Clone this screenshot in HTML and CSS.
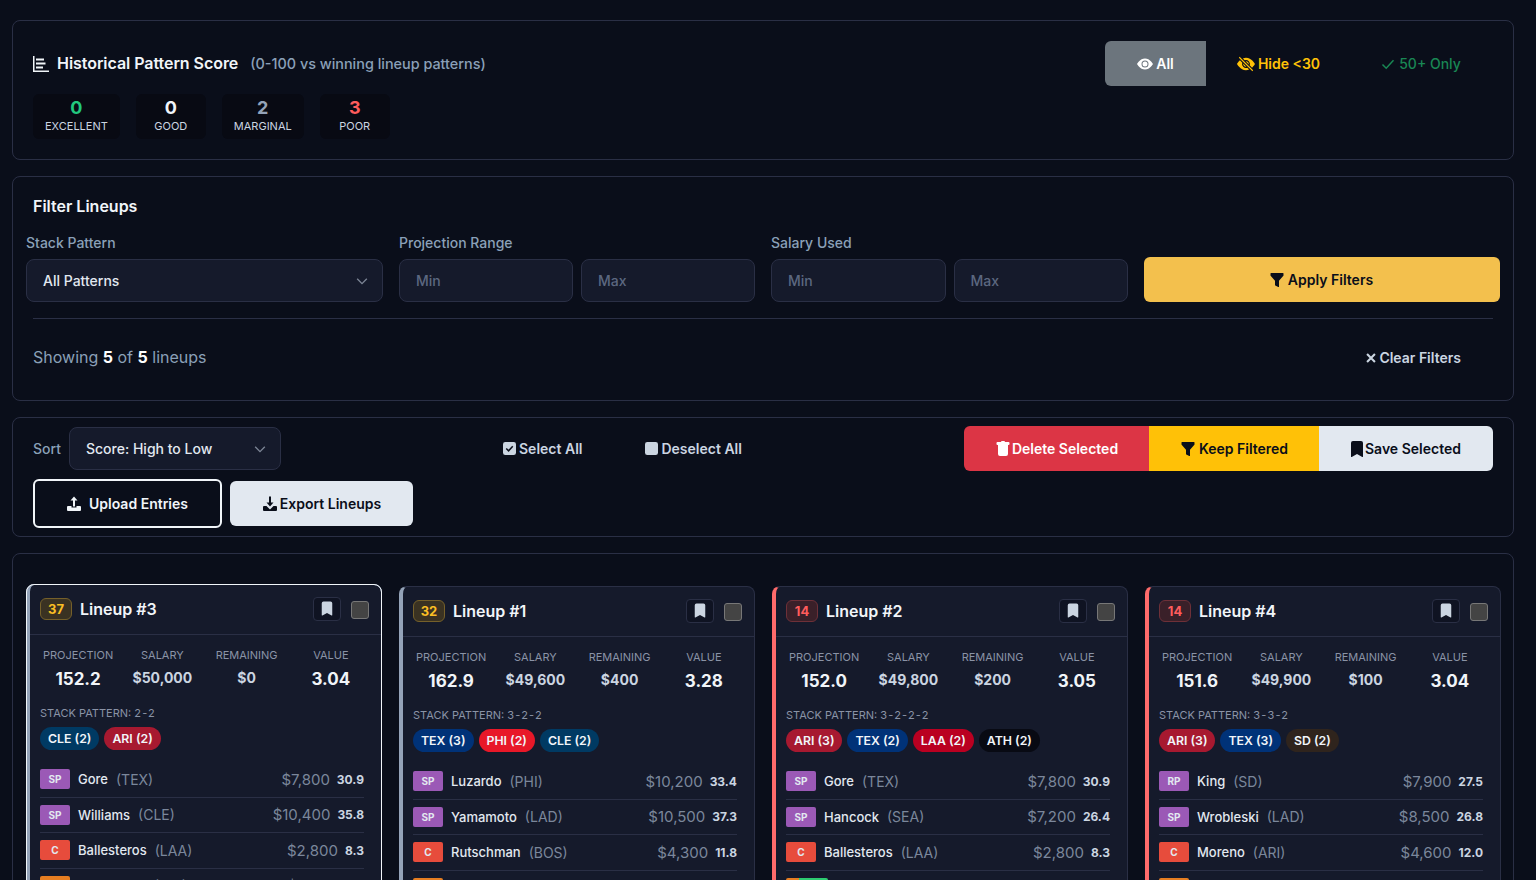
FILE: index.html
```html
<!DOCTYPE html>
<html lang="en">
<head>
    <meta charset="UTF-8">
    <meta name="viewport" content="width=device-width, initial-scale=1.0">
    <title>Lineups</title>
    <link rel="stylesheet" href="styles.css">
</head>
<body>
    <svg class="icon-defs" width="0" height="0" aria-hidden="true">
        <symbol id="i-bookmark" viewBox="0 0 16 16"><path fill="currentColor" d="M2 2a2 2 0 0 1 2-2h8a2 2 0 0 1 2 2v13.5a.5.5 0 0 1-.78.42L8 13.1l-5.22 2.82A.5.5 0 0 1 2 15.5V2z"/></symbol>
        <symbol id="i-funnel" viewBox="0 0 16 16"><path fill="currentColor" d="M1.5 1.5A.5.5 0 0 1 2 1h12a.5.5 0 0 1 .5.5v2a.5.5 0 0 1-.13.33L10 8.7v5.8a.5.5 0 0 1-.75.43l-3-1.5a.5.5 0 0 1-.25-.43V8.7L1.63 3.83a.5.5 0 0 1-.13-.33v-2z"/></symbol>
        <symbol id="i-chev" viewBox="0 0 16 16"><path fill="none" stroke="currentColor" stroke-width="1.6" d="M2.5 5.5L8 11l5.5-5.5"/></symbol>
    </svg>

    <section class="panel score-panel">
        <div class="score-left">
            <div class="score-title">
                <svg class="chart-icon" viewBox="0 0 16 16"><path fill="currentColor" d="M0 0h1.5v14.5H16V16H0z"/><path fill="currentColor" d="M3 2.5h8v2H3zM3 6.5h9.500v2H3zM3 10.5h7v2H3z"/></svg>
                <h2>Historical Pattern Score</h2>
                <span class="score-sub">(0-100 vs winning lineup patterns)</span>
            </div>
            <div class="score-stats">
                <div class="stat"><b class="green">0</b><span>EXCELLENT</span></div>
                <div class="stat"><b class="white">0</b><span>GOOD</span></div>
                <div class="stat"><b class="grey">2</b><span>MARGINAL</span></div>
                <div class="stat"><b class="red">3</b><span>POOR</span></div>
            </div>
        </div>
        <div class="score-toggle">
            <button class="tog tog-all">
                <svg class="ico" viewBox="0 0 16 16"><path fill="currentColor" d="M10.5 8a2.5 2.5 0 1 1-5 0 2.5 2.5 0 0 1 5 0z"/><path fill="currentColor" d="M0 8s3-5.5 8-5.5S16 8 16 8s-3 5.5-8 5.5S0 8 0 8zm8 3.5a3.5 3.5 0 1 0 0-7 3.5 3.5 0 0 0 0 7z"/></svg>
                All
            </button>
            <button class="tog tog-hide">
                <svg class="ico ico-slash" viewBox="0 0 16 16"><path fill="currentColor" d="m10.79 12.912-1.614-1.615a3.5 3.5 0 0 1-4.474-4.474l-2.06-2.06C.938 6.278 0 8 0 8s3 5.5 8 5.5a7.029 7.029 0 0 0 2.79-.588zM5.21 3.088A7.028 7.028 0 0 1 8 2.5c5 0 8 5.5 8 5.5s-.939 1.721-2.641 3.238l-2.062-2.062a3.5 3.5 0 0 0-4.474-4.474L5.21 3.089z"/><path fill="currentColor" d="M5.525 7.646a2.5 2.5 0 0 0 2.829 2.829l-2.83-2.829zm4.95.708-2.829-2.83a2.5 2.5 0 0 1 2.829 2.829zm3.171 6-12-12 .708-.708 12 12-.708.708z"/></svg>
                Hide &lt;30
            </button>
            <button class="tog tog-only">
                <svg class="ico" viewBox="0 0 16 16"><path fill="none" stroke="currentColor" stroke-width="1.5" d="M2.5 8.5l3.7 3.7 7.3-8"/></svg>
                50+ Only
            </button>
        </div>
    </section>

    <section class="panel filter-panel">
        <h3 class="filter-title">Filter Lineups</h3>
        <div class="filter-row">
            <div class="field field-pattern">
                <label>Stack Pattern</label>
                <div class="select">All Patterns<svg class="chev"><use href="#i-chev"/></svg></div>
            </div>
            <div class="field field-range">
                <label>Projection Range</label>
                <div class="range"><div class="input">Min</div><div class="input">Max</div></div>
            </div>
            <div class="field field-salary">
                <label>Salary Used</label>
                <div class="range"><div class="input">Min</div><div class="input">Max</div></div>
            </div>
            <button class="btn-apply"><svg class="ico"><use href="#i-funnel"/></svg>Apply Filters</button>
        </div>
        <div class="filter-foot">
            <p class="showing">Showing <b>5</b> of <b>5</b> lineups</p>
            <button class="btn-clear">
                <svg class="ico ico-x" viewBox="0 0 16 16"><path stroke="currentColor" stroke-width="2.4" d="M3.5 3.5l9 9M12.5 3.5l-9 9"/></svg>
                Clear Filters
            </button>
        </div>
    </section>

    <section class="panel sort-panel">
        <div class="sort-top">
            <span class="sort-label">Sort</span>
            <div class="select select-sort">Score: High to Low<svg class="chev"><use href="#i-chev"/></svg></div>
            <button class="link-btn select-all">
                <svg class="ico" viewBox="1 1 14 14"><rect x="1" y="1" width="14" height="14" rx="2.5" fill="currentColor"/><path fill="none" stroke="#0a0e1a" stroke-width="1.6" d="M4.5 8l2.5 2.5 4.5-5"/></svg>
                Select All
            </button>
            <button class="link-btn deselect-all">
                <svg class="ico" viewBox="1 1 14 14"><rect x="1" y="1" width="14" height="14" rx="2.5" fill="currentColor"/></svg>
                Deselect All
            </button>
            <div class="bulk">
                <button class="bulk-btn bulk-del">
                    <svg class="ico" viewBox="0 0 16 16"><path fill="currentColor" d="M2.5 1a1 1 0 0 0-1 1v1a1 1 0 0 0 1 1H3v9a2 2 0 0 0 2 2h6a2 2 0 0 0 2-2V4h.5a1 1 0 0 0 1-1V2a1 1 0 0 0-1-1H10a1 1 0 0 0-1-1H7a1 1 0 0 0-1 1H2.5z"/></svg>
                    Delete Selected
                </button>
                <button class="bulk-btn bulk-keep"><svg class="ico"><use href="#i-funnel"/></svg>Keep Filtered</button>
                <button class="bulk-btn bulk-save"><svg class="ico"><use href="#i-bookmark"/></svg>Save Selected</button>
            </div>
        </div>
        <div class="sort-actions">
            <button class="btn-upload">
                <svg class="ico" viewBox="0 0 16 16"><path fill="currentColor" d="M8 .5l3.5 4H9v6H7v-6H4.5z"/><path fill="currentColor" d="M1 11a1 1 0 0 1 1-1h3.5v1.5h5V10H14a1 1 0 0 1 1 1v3a1 1 0 0 1-1 1H2a1 1 0 0 1-1-1z"/></svg>
                Upload Entries
            </button>
            <button class="btn-export">
                <svg class="ico" viewBox="0 0 16 16"><path fill="currentColor" d="M8 10.5l3.5-4H9V.5H7v6H4.5z"/><path fill="currentColor" d="M1 11a1 1 0 0 1 1-1h2.5L8 13.5 11.5 10H14a1 1 0 0 1 1 1v3a1 1 0 0 1-1 1H2a1 1 0 0 1-1-1z"/></svg>
                Export Lineups
            </button>
        </div>
    </section>

    <section class="panel cards-panel">
        <div class="cards" id="cards"></div>
    </section>

    <script src="app.js"></script>
</body>
</html>
```

FILE: styles.css
```css
* {
    box-sizing: border-box;
}

html,
body {
    height: 880px;
    overflow: hidden;
}

body {
    margin: 0;
    padding: 20px 22px 0 12px;
    background-color: #0a0e1a;
    color: #e2e8f0;
    font-family: 'Inter', sans-serif;
    font-size: 14px;
}

button {
    font-family: 'Inter', sans-serif;
    font-size: 14px;
    font-weight: 600;
    padding: 0;
    border: none;
    display: flex;
    align-items: center;
    justify-content: center;
    gap: 3px;
    cursor: pointer;
}

.icon-defs {
    position: absolute;
}

.ico {
    width: 16px;
    height: 16px;
    flex: none;
}

.panel {
    border: 1px solid #2a2f45;
    border-radius: 8px;
    margin-bottom: 16px;
}

/* score panel */
.score-panel {
    height: 140px;
    padding: 20px 23px 20px 20px;
    display: flex;
    justify-content: space-between;
}

.score-title {
    display: flex;
    align-items: center;
    height: 45px;
}

.chart-icon {
    width: 16px;
    height: 16px;
    color: #f1f5f9;
    margin-right: 8px;
}

.score-title h2 {
    margin: -2px 0 0;
    font-size: 16px;
    font-weight: 600;
    letter-spacing: -0.05px;
    color: #f1f5f9;
}

.score-sub {
    margin-left: 12px;
    font-size: 14.4px;
    font-weight: 500;
    color: #8aa0b8;
}

.score-stats {
    display: flex;
    gap: 16px;
    margin-top: 8px;
}

.stat {
    min-width: 70px;
    height: 45px;
    padding: 4px 12px 0;
    background-color: #080a13;
    border-radius: 6px;
    text-align: center;
    display: flex;
    flex-direction: column;
}

.stat b {
    font-size: 18px;
    line-height: 20px;
    font-weight: 700;
}

.stat span {
    font-size: 11px;
    line-height: 17px;
    color: #cbd5e1;
}

.green { color: #22c77e; }
.white { color: #f1f5f9; }
.grey { color: #94a3b8; }
.red { color: #ff5c5c; }

.score-toggle {
    display: flex;
    height: 45px;
}

.tog {
    height: 45px;
    background: none;
}

.tog-all {
    width: 101px;
    background-color: #6c757d;
    color: #fff;
    border-radius: 6px 0 0 6px;
}

.tog-hide {
    width: 145px;
    color: #ffc107;
}

.ico-slash {
    width: 18px;
    height: 18px;
}

.tog-only {
    width: 139px;
    color: #198754;
    font-weight: 500;
}

/* filter panel */
.filter-panel {
    height: 225px;
    padding: 19px 13px 0;
}

.filter-title {
    margin: 0 0 18px 7px;
    font-size: 16px;
    line-height: 20px;
    font-weight: 600;
    color: #f1f5f9;
}

.filter-row {
    display: flex;
    align-items: flex-end;
    gap: 16px;
}

.field label {
    display: block;
    margin-bottom: 8px;
    font-size: 14px;
    line-height: 17px;
    font-weight: 500;
    color: #8aa0b8;
}

.field-pattern,
.field-salary {
    width: 357px;
}

.field-range {
    width: 356px;
}

.range {
    display: flex;
    gap: 8px;
}

.select,
.input {
    height: 43px;
    display: flex;
    align-items: center;
    justify-content: space-between;
    padding: 0 16px;
    background-color: #151a2b;
    border: 1px solid #2a2f45;
    border-radius: 8px;
}

.select {
    font-weight: 500;
    color: #e2e8f0;
}

.input {
    flex: 1;
    color: #5c6880;
    font-weight: 500;
}

.chev {
    width: 14px;
    height: 14px;
    margin-right: -3px;
    color: #7b8494;
}

.btn-apply {
    flex: 1;
    height: 45px;
    padding-right: 2px;
    background-color: #f3c04d;
    color: #0a0e1a;
    border-radius: 6px;
}

.filter-foot {
    margin: 16px 7px 0;
    padding-right: 32px;
    border-top: 1px solid #2a2f45;
    height: 76px;
    display: flex;
    align-items: center;
    justify-content: space-between;
}

.showing {
    margin: 0;
    font-size: 16px;
    color: #8aa0b8;
}

.showing b {
    color: #fff;
    font-weight: 700;
}

.btn-clear {
    margin-top: 2px;
    gap: 1px;
    background: none;
    color: #cbd5e1;
}

.ico-x {
    width: 14px;
    height: 14px;
}

/* sort panel */
.sort-panel {
    height: 120px;
    padding: 8px 20px 0;
}

.sort-top {
    display: flex;
    align-items: center;
}

.sort-label {
    color: #8aa0b8;
    font-weight: 500;
    width: 36px;
}

.select-sort {
    width: 212px;
}

.link-btn {
    background: none;
    color: #cbd5e1;
    height: 45px;
}

.link-btn .ico {
    width: 13px;
    height: 13px;
}

.select-all {
    margin-left: 222px;
}

.deselect-all {
    margin-left: 63px;
}

.bulk {
    margin-left: auto;
    display: flex;
}

.bulk-btn {
    height: 45px;
}

.bulk-del {
    width: 185px;
    gap: 1px;
    background-color: #dc3545;
    color: #fff;
    border-radius: 6px 0 0 6px;
}

.bulk-keep {
    width: 170px;
    background-color: #ffc107;
    color: #0a0e1a;
}

.bulk-save {
    width: 174px;
    padding-right: 2px;
    gap: 0;
    background-color: #e2e8f0;
    color: #0a0e1a;
    border-radius: 0 6px 6px 0;
}

.sort-actions {
    display: flex;
    align-items: center;
    gap: 8px;
    margin-top: 8px;
}

.sort-actions button {
    border-radius: 6px;
}

.btn-upload {
    width: 189px;
    height: 49px;
    background: none;
    border: 2px solid #f1f5f9;
    color: #f1f5f9;
    gap: 6px;
}

.btn-upload .ico {
    margin: 0 1px 0 -1px;
}

.btn-export {
    width: 183px;
    height: 45px;
    gap: 2px;
    background-color: #e2e8f0;
    color: #0a0e1a;
}

/* lineup cards */
.cards-panel {
    height: 400px;
    padding: 32px 13px 0;
    margin-bottom: 0;
}

.cards {
    display: grid;
    grid-template-columns: repeat(4, 356px);
    gap: 17px;
}

.card {
    height: 500px;
    background-color: #151a2b;
    border: 1px solid #2a2f45;
    border-left-width: 4px;
    border-radius: 8px;
}

.card-top {
    outline: 1px solid #f1f5f9;
    outline-offset: -1px;
    transform: translateY(-2px);
    border-color: #94a3b8;
}

.card-red {
    border-left-color: #ff6b6b;
}

.card-amber {
    border-left-color: #94a3b8;
}

.card-head {
    height: 50px;
    padding: 0 12px 2px 10px;
    display: flex;
    align-items: center;
    border-bottom: 1px solid #2a2f45;
}

.score-badge {
    width: 32px;
    height: 22px;
    border-radius: 6px;
    display: flex;
    align-items: center;
    justify-content: center;
    font-size: 13px;
    font-weight: 700;
    margin-right: 8px;
}

.badge-amber {
    background-color: #3a3222;
    border: 1px solid #75602a;
    color: #fbbf24;
}

.badge-red {
    background-color: #3a2029;
    border: 1px solid #6e3038;
    color: #ff5c5c;
}

.lineup-name {
    font-size: 16px;
    font-weight: 600;
    color: #f1f5f9;
    flex: 1;
}

.save-btn {
    width: 28px;
    height: 24px;
    background-color: #0f1322;
    border: 1px solid #2a2f45;
    border-radius: 4px;
    color: #cbd5e1;
    margin-right: 10px;
}

.save-btn .ico {
    width: 14px;
    height: 15px;
}

.check {
    width: 18px;
    height: 18px;
    background-color: #444;
    border: 1px solid #777;
    border-radius: 3px;
    margin-top: 2px;
}

.card-body {
    padding: 12px 17px 0 10px;
}

.metrics {
    display: grid;
    grid-template-columns: repeat(4, 1fr);
    text-align: center;
    margin: 0 -9px 0 -4px;
}

.metric span {
    display: block;
    font-size: 11px;
    line-height: 16px;
    color: #8a93a6;
}

.metric b {
    display: block;
    font-size: 17px;
    line-height: 20px;
    margin-top: 6px;
    color: #f1f5f9;
    font-weight: 700;
}

.metric .small {
    font-size: 14px;
    color: #cbd5e1;
    margin-top: 5px;
}

.stack-label {
    margin-top: 17px;
    font-size: 11px;
    line-height: 14px;
    color: #8a93a6;
}

.stack-label span {
    letter-spacing: 1.2px;
}

.stack-tags {
    display: flex;
    gap: 5px;
    margin-top: 7px;
    margin-bottom: 12px;
}

.tag {
    height: 23px;
    padding: 0 8px;
    border-radius: 12px;
    display: flex;
    align-items: center;
    font-size: 12.3px;
    font-weight: 600;
    color: #f1f5f9;
}

.player {
    height: 35.5px;
    display: flex;
    align-items: center;
    border-bottom: 1px solid #2a2f45;
    font-size: 13px;
}

.pos {
    width: 30px;
    height: 20px;
    border-radius: 2px;
    display: flex;
    align-items: center;
    justify-content: center;
    font-size: 10px;
    font-weight: 700;
    color: #e2e8f0;
    margin-right: 8px;
}

.pos-sp { background-color: #9b59b6; }
.pos-c { background-color: #e74c3c; }
.pos-of { background-color: #e67e22; }
.pos-multi { width: 42px; background: linear-gradient(90deg, #e67e22 30%, #2ecc71 30%); }

.p-name {
    color: #e2e8f0;
    font-weight: 500;
}

.p-team {
    margin-left: 8px;
    font-size: 14px;
    color: #7b879b;
}

.p-sal {
    margin-left: auto;
    font-size: 15px;
    color: #7b879b;
}

.p-pts {
    margin-left: 7px;
    font-size: 12px;
    font-weight: 700;
    color: #cbd5e1;
}
```

FILE: app.js
```js
const lineups = [
    { id: 3, score: 37, cls: "card-amber card-top", badge: "badge-amber", proj: "152.2", sal: "$50,000", rem: "$0", val: "3.04", pattern: "2-2",
      tags: [["CLE (2)", "#003a63"], ["ARI (2)", "#a71930"]],
      players: [["SP", "Gore", "TEX", "$7,800", "30.9"], ["SP", "Williams", "CLE", "$10,400", "35.8"], ["C", "Ballesteros", "LAA", "$2,800", "8.3"], ["OF", "Schwarber", "PHI", "$2,900", "8.7"]] },
    { id: 1, score: 32, cls: "card-amber", badge: "badge-amber", proj: "162.9", sal: "$49,600", rem: "$400", val: "3.28", pattern: "3-2-2",
      tags: [["TEX (3)", "#003278"], ["PHI (2)", "#e81828"], ["CLE (2)", "#003a63"]],
      players: [["SP", "Luzardo", "PHI", "$10,200", "33.4"], ["SP", "Yamamoto", "LAD", "$10,500", "37.3"], ["C", "Rutschman", "BOS", "$4,300", "11.8"], ["OF", "Schwarber", "PHI", "$2,900", "8.7"]] },
    { id: 2, score: 14, cls: "card-red", badge: "badge-red", proj: "152.0", sal: "$49,800", rem: "$200", val: "3.05", pattern: "3-2-2-2",
      tags: [["ARI (3)", "#a71930"], ["TEX (2)", "#003278"], ["LAA (2)", "#ba0021"], ["ATH (2)", "#080a13"]],
      players: [["SP", "Gore", "TEX", "$7,800", "30.9"], ["SP", "Hancock", "SEA", "$7,200", "26.4"], ["C", "Ballesteros", "LAA", "$2,800", "8.3"], ["1B/OF", "Soderstrom", "ATH", "$4,500", "12.6"]] },
    { id: 4, score: 14, cls: "card-red", badge: "badge-red", proj: "151.6", sal: "$49,900", rem: "$100", val: "3.04", pattern: "3-3-2",
      tags: [["ARI (3)", "#a71930"], ["TEX (3)", "#003278"], ["SD (2)", "#2f241d"]],
      players: [["RP", "King", "SD", "$7,900", "27.5"], ["SP", "Wrobleski", "LAD", "$8,500", "26.8"], ["C", "Moreno", "ARI", "$4,600", "12.0"], ["OF", "Carroll", "ARI", "$5,400", "14.1"]] }
];

function posClass(pos) {
    if (pos === "C") return "pos-c";
    if (pos === "OF") return "pos-of";
    if (pos === "1B/OF") return "pos-multi";
    return "pos-sp";
}

function renderCard(l) {
    const tags = l.tags.map(t => `<span class="tag" style="background-color:${t[1]}">${t[0]}</span>`).join("");
    const players = l.players.map(p => `
        <div class="player">
            <span class="pos ${posClass(p[0])}">${p[0]}</span>
            <span class="p-name">${p[1]}</span>
            <span class="p-team">(${p[2]})</span>
            <span class="p-sal">${p[3]}</span>
            <span class="p-pts">${p[4]}</span>
        </div>`).join("");
    return `
    <article class="card ${l.cls}">
        <div class="card-head">
            <span class="score-badge ${l.badge}">${l.score}</span>
            <span class="lineup-name">Lineup #${l.id}</span>
            <button class="save-btn"><svg class="ico"><use href="#i-bookmark"/></svg></button>
            <span class="check"></span>
        </div>
        <div class="card-body">
            <div class="metrics">
                <div class="metric"><span>PROJECTION</span><b>${l.proj}</b></div>
                <div class="metric"><span>SALARY</span><b class="small">${l.sal}</b></div>
                <div class="metric"><span>REMAINING</span><b class="small">${l.rem}</b></div>
                <div class="metric"><span>VALUE</span><b>${l.val}</b></div>
            </div>
            <div class="stack-label">STACK PATTERN: <span>${l.pattern}</span></div>
            <div class="stack-tags">${tags}</div>
            ${players}
        </div>
    </article>`;
}

document.getElementById("cards").innerHTML = lineups.map(renderCard).join("");
```
